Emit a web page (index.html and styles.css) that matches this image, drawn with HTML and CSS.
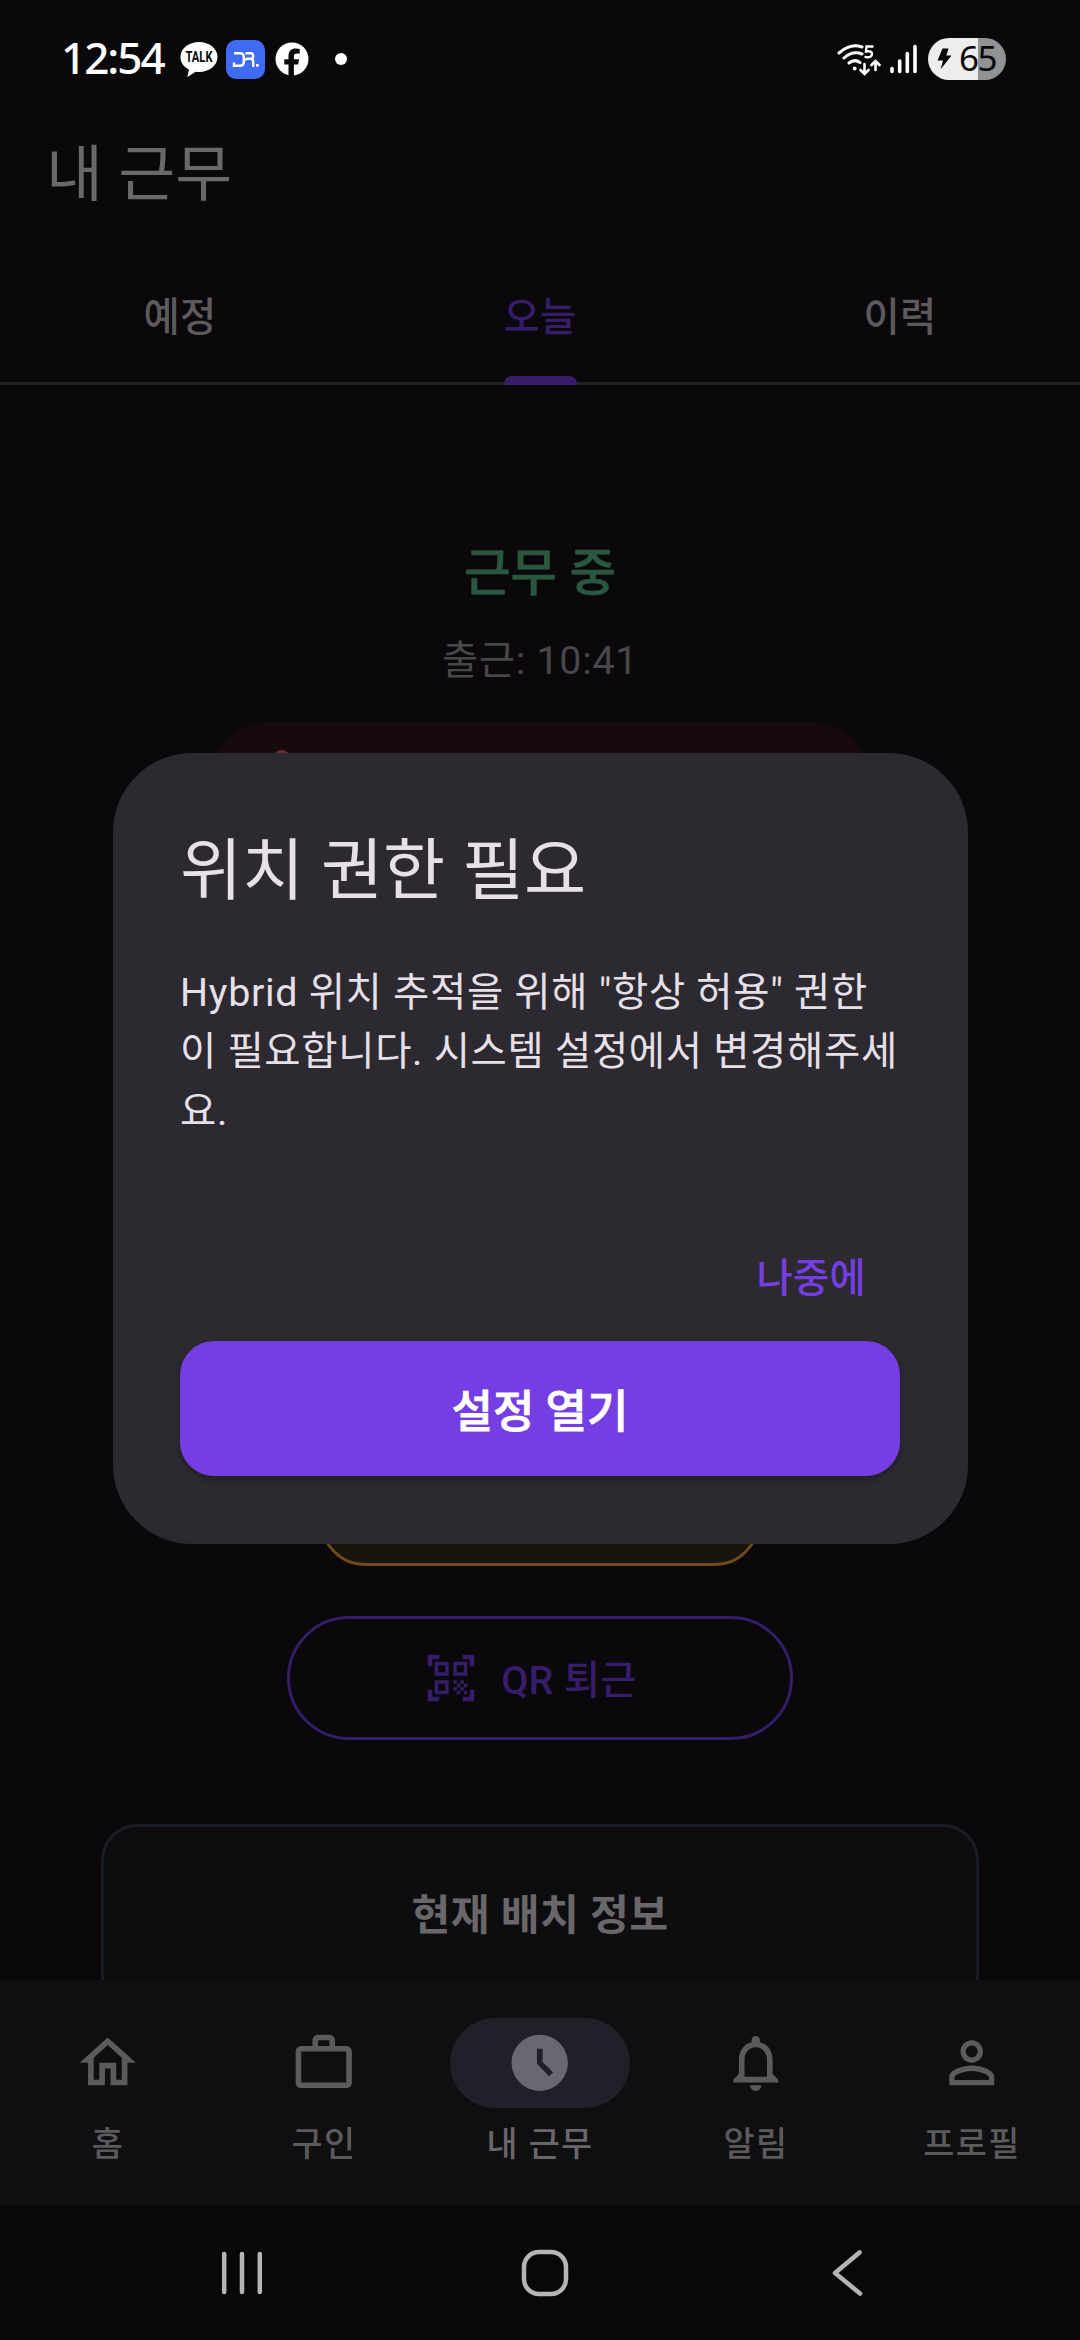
FILE: index.html
```html
<!DOCTYPE html>
<html lang="ko">
<head>
<meta charset="utf-8">
<title>내 근무</title>
<link rel="stylesheet" href="styles.css">
</head>
<body>
<div class="screen">
  <div class="status-bar">
    <span class="clock">12:54</span>
    <svg class="ic-talk" width="38" height="38" viewBox="0 0 38 38"><path fill="#fff" d="M19 2C8.800 2 .5 8.500.5 17c0 5.500 3.400 10 8.500 12.500L7.300 37l8.500-5.200c1 .1 2.100.2 3.200.2 10.200 0 18.500-6.500 18.500-15S29.200 2 19 2z"/><text x="19" y="22" text-anchor="middle" textLength="27" lengthAdjust="spacingAndGlyphs" class="talk-text">TALK</text></svg>
    <svg class="ic-dr" width="39" height="39" viewBox="0 0 39 39"><rect width="39" height="39" rx="10" fill="#406cf4"/><path fill="none" stroke="#fff" stroke-width="2.400" d="M8 13.300h6q3.800 0 3.800 3.500v5.400q0 3.500-3.800 3.500H8v-3.200M19.500 13.300h5q2.700 0 2.700 2.700t-2.700 2.700H20M20 18.500v2M24.500 18.700q2.700 0 2.700 2.700V27"/><rect x="30" y="24" width="2.700" height="2.700" fill="#fff"/></svg>
    <svg class="ic-fb" width="34" height="34" viewBox="0 0 34 34"><circle cx="17" cy="17" r="16.500" fill="#fff"/><path fill="#0a080b" d="M13.500 34V22.500H9.300v-5.200h4.200V14c0-5 2.700-7.600 7.200-7.600 1.500 0 3 .2 4 .5v4.700h-2.500c-2.500 0-3.300 1.300-3.300 3v2.700h5.200l-1 5.200h-4.200V34z"/></svg>
    <i class="more-dot"></i>
    <div class="status-right">
      <svg width="44" height="34" viewBox="0 0 44 34" fill="none" stroke="#fff" stroke-width="3" stroke-linecap="round"><path d="M2 11Q13.500 1 25 5M7 16Q15.500 8 25 12M12 21Q17.500 16.500 23 20.500"/><circle cx="17.700" cy="26.500" r="1.900" fill="#fff" stroke="none"/><path stroke-width="2.400" d="M35.500 4.500h-6l-.5 5q6-1.200 6 2.500 0 4-6.500 3"/><path stroke-width="2.600" d="M27.500 22v9M23.500 28l4 4 4-4M38.500 28v-8M34.500 23l4-4 4 4"/></svg>
      <svg class="ic-signal" width="28" height="30" viewBox="0 0 28 30" stroke="#fff" stroke-width="3.600" stroke-linecap="round"><path d="M2 24.500v3M9.700 17v10.500M17.300 9.500v18M25 2.500v25"/></svg>
      <div class="battery">
        <svg width="15" height="22" viewBox="0 0 15 22"><path fill="#0a080b" d="M5.500.5h6L9.300 7.500h5.200L3.500 21.500 6 12.500H.5z"/></svg>
        <span>65</span>
      </div>
    </div>
  </div>

  <h1 class="app-title">내 근무</h1>

  <div class="tabs">
    <div class="tab">예정</div>
    <div class="tab tab-active"><span>오늘</span><i class="tab-indicator"></i></div>
    <div class="tab">이력</div>
  </div>

  <div class="content">
    <div class="state">근무 중</div>
    <div class="checkin">출근: 10:41</div>
    <div class="warning"><i class="warning-dot"></i></div>
    <div class="break-button"></div>
    <div class="qr-button">
      <svg width="56" height="56" viewBox="0 0 24 24" fill="#351d69"><path d="M9.500 6.500v3h-3v-3h3M11 5H5v6h6V5zm-1.500 9.500v3h-3v-3h3M11 13H5v6h6v-6zm6.500-6.500v3h-3v-3h3M19 5h-6v6h6V5zm-6 8h1.500v1.500H13V13zm1.500 1.500H16V16h-1.500v-1.500zM16 13h1.500v1.500H16V13zm-3 3h1.500v1.500H13V16zm1.500 1.500H16V19h-1.500v-1.500zM16 16h1.500v1.500H16V16zm1.500-1.500H19V16h-1.500v-1.500zm0 3H19V19h-1.500v-1.500zM22 7h-2V4h-3V2h5v5zm0 15v-5h-2v3h-3v2h5zM2 22h5v-2H4v-3H2v5zM2 2v5h2V4h3V2H2z"/></svg>
      <span>QR 퇴근</span>
    </div>
    <div class="info-card">현재 배치 정보</div>
  </div>

  <nav class="bottom-nav">
    <div class="nav-item">
      <div class="nav-icon"><svg viewBox="0 0 24 24"><path d="M12 5.690l5 4.500V18h-2v-6H9v6H7v-7.810l5-4.500M12 3L2 12h3v8h6v-6h2v6h6v-8h3L12 3z"/></svg></div>
      <span>홈</span>
    </div>
    <div class="nav-item">
      <div class="nav-icon"><svg viewBox="0 0 24 24"><path fill-rule="evenodd" d="M14 6V4h-4v2h4zM4 8v11h16V8H4zm16-2c1.110 0 2 .89 2 2v11c0 1.110-.89 2-2 2H4c-1.110 0-2-.89-2-2V8c0-1.110.89-2 2-2h4V4c0-1.110.89-2 2-2h4c1.110 0 2 .89 2 2v2h4z"/></svg></div>
      <span>구인</span>
    </div>
    <div class="nav-item nav-active">
      <div class="nav-icon"><svg viewBox="0 0 24 24"><path d="M12 2C6.500 2 2 6.500 2 12s4.500 10 10 10 10-4.500 10-10S17.500 2 12 2zm3.300 14.800L11 12.300V7h2v4.700l3.750 3.700-1.450 1.400z"/></svg></div>
      <span>내 근무</span>
    </div>
    <div class="nav-item">
      <div class="nav-icon"><svg viewBox="0 0 24 24"><path d="M12 22c1.100 0 2-.9 2-2h-4c0 1.100.89 2 2 2zm6-6v-5c0-3.070-1.640-5.640-4.500-6.320V4c0-.83-.67-1.500-1.500-1.500s-1.500.67-1.500 1.500v.68C7.630 5.360 6 7.920 6 11v5l-2 2v1h16v-1l-2-2zm-2 1H8v-6c0-2.480 1.510-4.500 4-4.500s4 2.020 4 4.500v6z"/></svg></div>
      <span>알림</span>
    </div>
    <div class="nav-item">
      <div class="nav-icon"><svg viewBox="0 0 24 24"><path d="M12 5.900c1.160 0 2.100.94 2.100 2.100s-.94 2.100-2.100 2.100S9.900 9.160 9.900 8s.94-2.100 2.100-2.100m0 9c2.970 0 6.100 1.460 6.100 2.100v1.100H5.900V17c0-.64 3.130-2.100 6.100-2.100M12 4C9.790 4 8 5.790 8 8s1.790 4 4 4 4-1.790 4-4-1.790-4-4-4zm0 9c-2.670 0-8 1.340-8 4v3h16v-3c0-2.660-5.330-4-8-4z"/></svg></div>
      <span>프로필</span>
    </div>
  </nav>

  <div class="system-nav">
    <svg width="42" height="46" viewBox="0 0 42 46"><path d="M3.200 4v38M21 4v38M38.800 4v38"/></svg>
    <svg width="52" height="48" viewBox="0 0 52 48"><rect x="3" y="3" width="42" height="42" rx="15"/></svg>
    <svg width="32" height="48" viewBox="0 0 32 48"><path d="M28.500 3.500L4 24l25 20.500"/></svg>
  </div>

  <div class="dialog">
    <h2>위치 권한 필요</h2>
    <p>Hybrid 위치 추적을 위해 "항상 허용" 권한이 필요합니다. 시스템 설정에서 변경해주세요.</p>
    <div class="later">나중에</div>
    <div class="open-settings">설정 열기</div>
  </div>
</div>
</body>
</html>
```
FILE: styles.css
```css
* { box-sizing: border-box; }

body {
  margin: 0;
  background: #0a080b;
  font-family: Roboto, "Noto Sans CJK KR", sans-serif;
}

svg { display: block; flex: none; }

.screen {
  position: relative;
  display: flex;
  flex-direction: column;
  width: 1080px;
  height: 2340px;
  overflow: hidden;
}

/* Status bar */
.status-bar {
  display: flex;
  align-items: center;
  height: 93px;
  padding: 25px 74px 0 61px;
  flex: none;
}
.clock {
  width: 119px;
  margin-top: -4px;
  color: #fff;
  font: 500 44px/60px "Noto Sans", sans-serif;
  letter-spacing: -2px;
}
.talk-text { font: 700 14px Roboto, sans-serif; fill: #0a080b; }
.ic-dr { margin-left: 8px; }
.ic-fb { margin-left: 10px; }
.more-dot {
  width: 12px;
  height: 12px;
  margin-left: 26px;
  border-radius: 50%;
  background: #fff;
}
.status-right { display: flex; align-items: center; margin-left: auto; }
.ic-signal { margin-left: 9px; }
.battery {
  display: flex;
  align-items: center;
  width: 78px;
  height: 42px;
  margin-left: 10px;
  padding-left: 9px;
  gap: 7px;
  border-radius: 21px;
  background: linear-gradient(90deg, #ededed 50px, #929292 50px);
  color: #0a080b;
  font: 400 35px/40px "Noto Sans", sans-serif;
  letter-spacing: -1.500px;
}
.battery span { height: 42px; }

/* Header */
.app-title {
  height: 157px;
  margin: 0;
  padding-left: 46px;
  flex: none;
  color: #6a686b;
  font-size: 61.900px;
  font-weight: 400;
  line-height: 165px;
}
.tabs {
  display: grid;
  grid-template-columns: repeat(3, 1fr);
  height: 135px;
  flex: none;
  border-bottom: 3px solid #201f22;
  color: #5c5a5d;
  font-size: 39.400px;
  font-weight: 500;
  letter-spacing: 0.300px;
  line-height: 136px;
  text-align: center;
}
.tab-active {
  display: flex;
  flex-direction: column;
  align-items: center;
  color: #351d69;
}
.tab-active span { height: 126px; }
.tab-indicator {
  width: 73px;
  height: 9px;
  flex: none;
  border-radius: 8px 8px 0 0;
  background: #371c6a;
}

/* Page content */
.content {
  display: flex;
  flex-direction: column;
  align-items: center;
  height: 1595px;
  flex: none;
  overflow: hidden;
}
.state {
  margin-top: 151px;
  color: #29573f;
  font-size: 50.600px;
  font-weight: 500;
  line-height: 76px;
  -webkit-text-stroke: 0.600px #29573f;
}
.checkin {
  margin-top: 19px;
  color: #484649;
  font-size: 39.400px;
  letter-spacing: 0.700px;
  line-height: 60px;
}
.warning {
  width: 658px;
  height: 236px;
  margin-top: 31px;
  padding: 28px 0 0 62px;
  flex: none;
  border-radius: 56px;
  background: #160a0d;
}
.warning-dot { display: block; width: 17px; height: 17px; border-radius: 50%; background: #6b2b2a; }
.break-button {
  width: 440px;
  height: 124px;
  margin-top: 484px;
  flex: none;
  border: 3px solid #6d4a1b;
  border-radius: 45px;
  background: #1a150c;
}
.qr-button {
  display: flex;
  align-items: center;
  justify-content: center;
  gap: 22px;
  width: 506px;
  height: 124px;
  margin-top: 50px;
  padding-right: 20px;
  flex: none;
  border: 3px solid #351d69;
  border-radius: 62px;
  color: #351d69;
  font-size: 39.400px;
  font-weight: 500;
  letter-spacing: 0.300px;
  line-height: 60px;
}
.qr-button span { padding-top: 5px; }
.info-card {
  width: 878px;
  height: 300px;
  margin-top: 84px;
  padding-top: 57px;
  flex: none;
  border: 3px solid #181d24;
  border-radius: 36px;
  background: #0d0d0f;
  color: #69676a;
  font-size: 42.200px;
  font-weight: 700;
  letter-spacing: 0.400px;
  line-height: 64px;
  text-align: center;
}

/* Bottom navigation */
.bottom-nav {
  display: grid;
  grid-template-columns: repeat(5, 1fr);
  height: 225px;
  flex: none;
  background: #0f0f11;
}
.nav-item {
  display: flex;
  flex-direction: column;
  align-items: center;
  padding-top: 38px;
  color: #5c5a5d;
  font-size: 33.750px;
  font-weight: 500;
  letter-spacing: 1.400px;
  line-height: 45px;
}
.nav-icon {
  display: flex;
  align-items: center;
  justify-content: center;
  width: 180px;
  height: 90px;
  margin-bottom: 14px;
  border-radius: 45px;
}
.nav-icon svg { width: 67.500px; height: 67.500px; fill: #5c5a5d; }
.nav-active { color: #69676a; }
.nav-active .nav-icon { background: #221f29; }
.nav-active svg { fill: #6b6771; }

.system-nav {
  display: flex;
  align-items: center;
  justify-content: space-between;
  height: 135px;
  padding: 0 217px 0 221px;
  flex: none;
  background: #08080a;
}
.system-nav svg { fill: none; stroke: #b5b5b5; stroke-width: 4.500; stroke-linecap: round; stroke-linejoin: round; }

/* Permission dialog */
.dialog {
  position: absolute;
  left: 112.500px;
  top: 753px;
  width: 855px;
  height: 790.500px;
  padding: 69.500px 67.500px 0;
  border-radius: 79px;
  background: #2c2930;
}
.dialog h2 {
  margin: 0;
  color: #e6e0e8;
  font-size: 67.500px;
  font-weight: 400;
  line-height: 96px;
}
.dialog p {
  height: 178px;
  margin: 44px 0 0;
  color: #e6e0e8;
  font-size: 39.400px;
  letter-spacing: 0.700px;
  line-height: 59.500px;
}
.later {
  margin-top: 108px;
  padding-right: 34px;
  color: #753fe0;
  font-size: 39.400px;
  font-weight: 500;
  letter-spacing: 0.300px;
  line-height: 60px;
  text-align: right;
}
.open-settings {
  height: 135px;
  margin-top: 32px;
  border-radius: 34px;
  background: #753ee3;
  box-shadow: 0 3px 6px rgba(0, 0, 0, 0.300);
  color: #fff;
  font-size: 45px;
  font-weight: 500;
  line-height: 144px;
  text-align: center;
  -webkit-text-stroke: 0.800px #fff;
}
```
